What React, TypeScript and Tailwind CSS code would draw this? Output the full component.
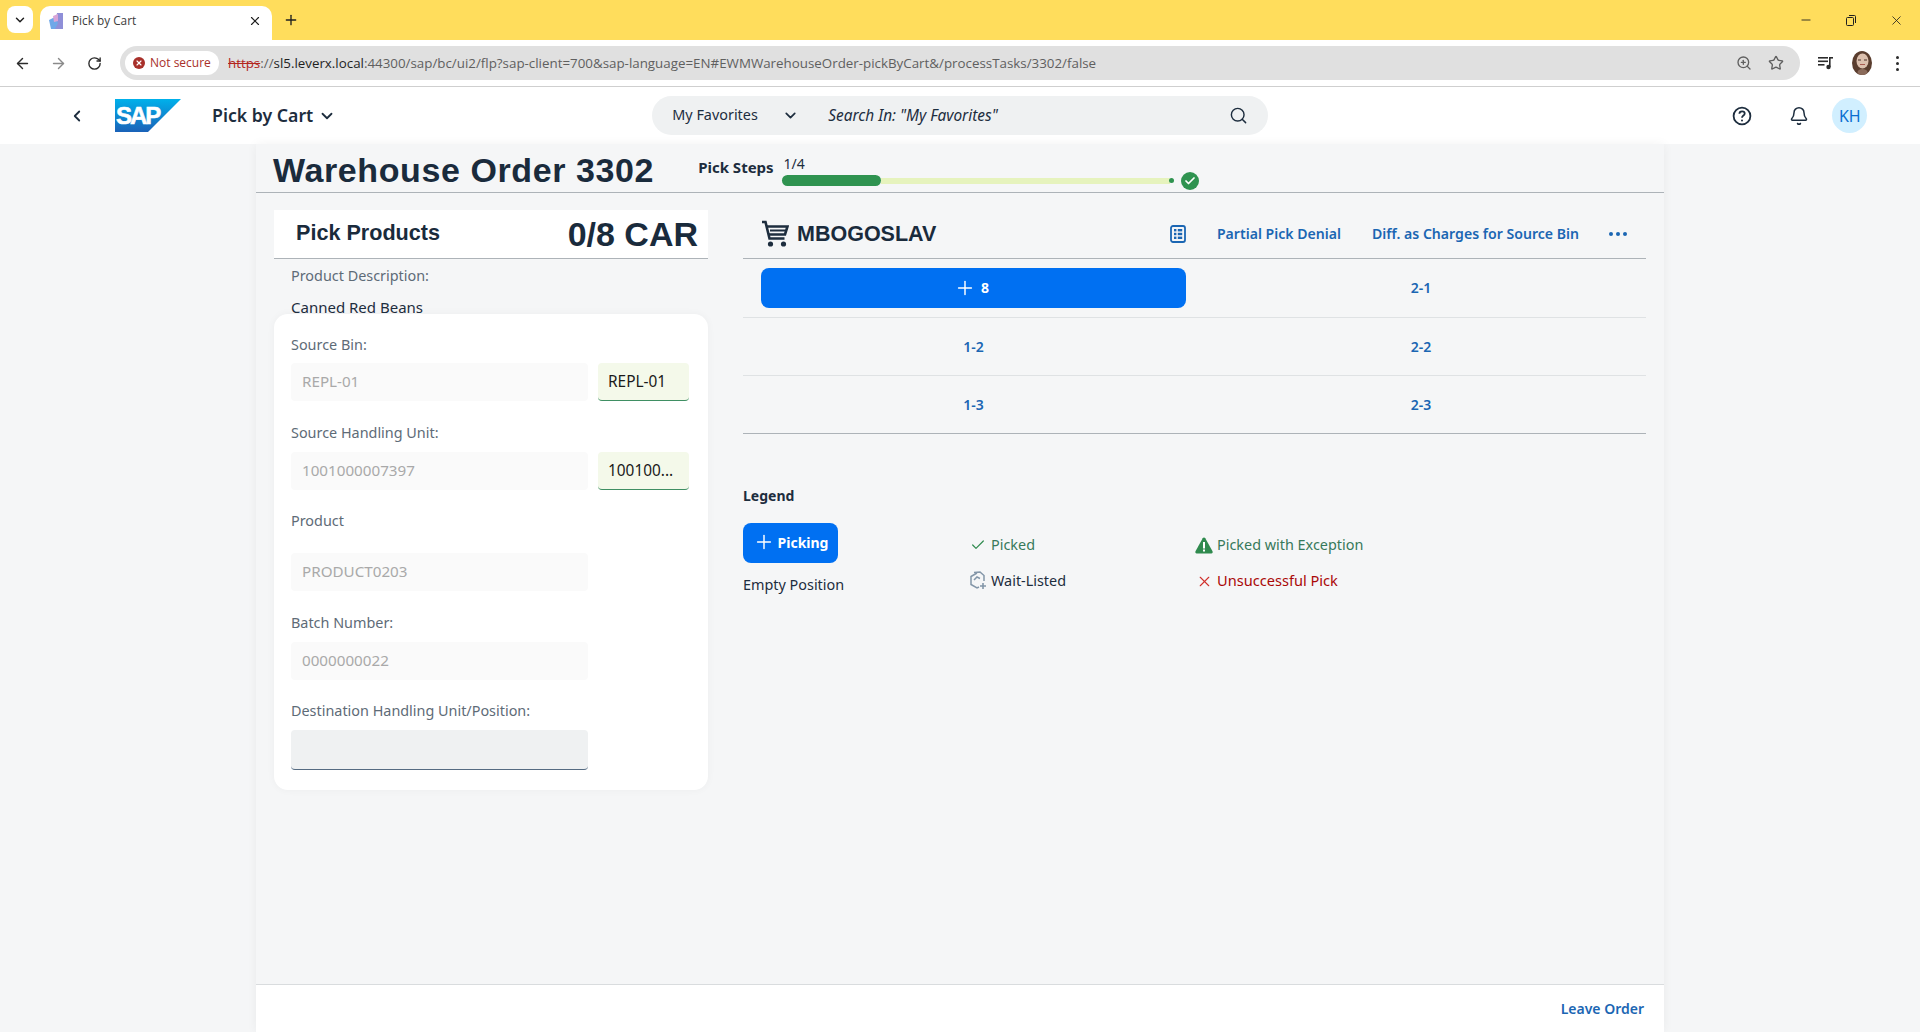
import React from 'react';
import {
  ArrowLeft,
  ArrowRight,
  Bell,
  Check,
  ChevronDown,
  ChevronLeft,
  Minus,
  Plus,
  RotateCw,
  Search,
  Star,
  X,
  ZoomIn,
} from 'lucide-react';

// ---- drawn icons ----

const SapLogo = () => (
  <svg width="66" height="33" viewBox="0 0 66 33" className="shrink-0">
    <defs>
      <linearGradient id="sapBlue" x1="0" y1="0" x2="0" y2="1">
        <stop offset="0" stopColor="#00b1eb" />
        <stop offset="1" stopColor="#1a62b8" />
      </linearGradient>
    </defs>
    <polygon points="0,0 66,0 33,33 0,33" fill="url(#sapBlue)" />
    <text
      x="1"
      y="25"
      fill="#ffffff"
      stroke="#ffffff"
      strokeWidth="0.6"
      fontFamily="'Liberation Sans', sans-serif"
      fontWeight="700"
      fontSize="24"
      letterSpacing="-2"
    >
      SAP
    </text>
  </svg>
);

const CartIcon = () => (
  <svg width="28" height="28" viewBox="0 0 28 28" fill="none" stroke="#1d2d3e" strokeWidth="2.6" className="shrink-0">
    <path d="M1 2h3.500l4 16.500h15" />
    <path d="M6 6.500h20.500l-2.500 8H8" />
    <path d="M9 10.500h15.500" strokeWidth="2" />
    <circle cx="9.500" cy="24" r="2.600" fill="#1d2d3e" stroke="none" />
    <circle cx="22.500" cy="24" r="2.600" fill="#1d2d3e" stroke="none" />
  </svg>
);

const ListIcon = () => (
  <svg width="16" height="18" viewBox="0 0 16 18" fill="none" className="shrink-0">
    <rect x="1" y="1" width="14" height="16" rx="2" stroke="#1b66b3" strokeWidth="1.8" />
    <g fill="#1b66b3">
      <rect x="4" y="4" width="2.400" height="2.400" />
      <rect x="7.800" y="4" width="4.400" height="2.400" />
      <rect x="4" y="7.800" width="2.400" height="2.400" />
      <rect x="7.800" y="7.800" width="4.400" height="2.400" />
      <rect x="4" y="11.600" width="2.400" height="2.400" />
      <rect x="7.800" y="11.600" width="4.400" height="2.400" />
    </g>
  </svg>
);

const HelpIcon = () => (
  <svg width="20" height="20" viewBox="0 0 20 20" fill="none" stroke="#1d2d3e" strokeWidth="1.8" className="shrink-0">
    <circle cx="10" cy="10" r="8.400" />
    <path d="M7.400 7.800c0-1.600 1.200-2.500 2.700-2.500s2.600.9 2.600 2.200c0 2.100-2.700 2-2.700 4.200" />
    <circle cx="10" cy="14.400" r="1" fill="#1d2d3e" stroke="none" />
  </svg>
);

const WaitListedIcon = () => (
  <svg width="19" height="20" viewBox="0 0 19 20" fill="none" stroke="#8396a8" strokeWidth="1.500" className="shrink-0">
    <path d="M8 2 2 5.500v8L8 17l2-1" />
    <path d="M5 1.500 11 1l4 3.500v5.500" />
    <path d="M5 9l3-3 3 1.500" />
    <path d="M14 12v6M11 15h6" strokeWidth="1.600" />
  </svg>
);

const WarningIcon = () => (
  <svg width="18" height="17" viewBox="0 0 18 17" className="shrink-0">
    <path d="M9 .5c.6 0 1 .3 1.300.8l7.200 13c.5 1 0 2.200-1.200 2.200H1.700C.5 16.500 0 15.300.500 14.300l7.200-13C8 .8 8.400.5 9 .5z" fill="#2f8a4e" />
    <rect x="8" y="5" width="2" height="6.500" fill="#ffffff" />
    <rect x="8" y="12.500" width="2" height="2" fill="#ffffff" />
  </svg>
);

const MediaIcon = () => (
  <svg width="16" height="16" viewBox="0 0 16 16" fill="#2b2b2b" className="shrink-0">
    <rect x="0" y="2" width="10" height="1.600" />
    <rect x="0" y="5.500" width="10" height="1.600" />
    <rect x="0" y="9" width="6.500" height="1.600" />
    <rect x="11" y="2" width="4" height="1.600" />
    <rect x="11" y="2" width="1.600" height="10" />
    <circle cx="10.500" cy="12" r="2.200" />
  </svg>
);

const Favicon = () => (
  <svg width="14" height="16" viewBox="0 0 14 16" className="shrink-0">
    <path d="M8 0h6v16H5z" fill="#8f8fd8" />
    <path d="M0 7l6-3 3 6-3 6H2z" fill="#6fa8e8" />
    <path d="M4 3l5-2v7l-4 1z" fill="#d8a4d8" />
  </svg>
);

const RestoreIcon = () => (
  <svg width="12" height="12" viewBox="0 0 12 12" fill="none" stroke="#1f1f1f" strokeWidth="1" className="shrink-0">
    <rect x="1.500" y="3.500" width="7" height="8" rx="1" />
    <path d="M4 1.500h5.500a1 1 0 0 1 1 1V9" />
  </svg>
);

const ChromeAvatar = () => (
  <svg width="20" height="24" viewBox="0 0 20 24" className="shrink-0">
    <ellipse cx="10" cy="12" rx="10" ry="12" fill="#5a3d2e" />
    <ellipse cx="10.500" cy="10" rx="6" ry="7.500" fill="#dcc0ae" />
    <path d="M6 9h3M12 9h3" stroke="#4a3026" strokeWidth="1" />
    <path d="M8 13.500h5" stroke="#a85a50" strokeWidth="1" />
    <ellipse cx="10.500" cy="21" rx="5" ry="3" fill="#8a6a5a" />
  </svg>
);

// ---- small pieces ----

interface FieldProps {
  label: string;
  value?: string;
  scanned?: string;
  labelClass: string;
  boxClass?: string;
}

const Field: React.FC<FieldProps> = ({ label, value, scanned, labelClass, boxClass }) => (
  <div>
    <div className={`text-[14.4px] leading-[20px] text-[#5e6b77] ${labelClass}`}>{label}</div>
    <div className="flex gap-[10px]">
      <div
        className={`w-[297px] rounded-[4px] px-[11px] pb-[2px] flex items-center text-[15.2px] text-[#a9a9a9] ${
          boxClass ?? 'h-[38px] bg-[#fafafa]'
        }`}
      >
        {value}
      </div>
      {scanned && (
        <div className="w-[91px] h-[38px] rounded-[4px] bg-[#f4f9ea] pl-[10px] flex items-center text-[15.4px] text-[#1a1a1a] border-b border-[#3f8f63]">
          {scanned}
        </div>
      )}
    </div>
  </div>
);

const BinLink = ({ children }: { children: React.ReactNode }) => (
  <span className="text-[14px] font-semibold text-[#1b66b3] mt-[-1px]">{children}</span>
);

// ---- page ----

export default function App() {
  return (
    <div className="h-[1032px] w-[1920px] overflow-hidden flex flex-col bg-[#f5f6f7] font-['Noto_Sans',sans-serif] text-[#1d2d3e]">
      {/* Browser tab strip */}
      <div className="h-[40px] shrink-0 bg-[#ffdd5c] flex items-end pl-[7px]">
        <div className="w-[26px] h-[27px] mb-[7px] bg-white rounded-[8px] flex items-center justify-center">
          <ChevronDown size={14} strokeWidth={2.5} color="#1f1f1f" />
        </div>
        <div className="w-[232px] h-[34px] ml-[7px] bg-white rounded-t-[10px] flex items-center pl-[9px] pr-[10px] pb-[4px]">
          <Favicon />
          <span className="ml-[9px] text-[11.8px] text-[#3c3c3c] font-['Open_Sans',sans-serif]">Pick by Cart</span>
          <X size={14} strokeWidth={2} color="#1f1f1f" className="ml-auto" />
        </div>
        <Plus size={16} strokeWidth={2} color="#1f1f1f" className="ml-[11px] mb-[12px]" />
        <div className="ml-auto h-[40px] flex items-center pr-[16px] gap-[32px]">
          <Minus size={14} strokeWidth={1.5} color="#1f1f1f" />
          <RestoreIcon />
          <X size={15} strokeWidth={1.3} color="#1f1f1f" />
        </div>
      </div>

      {/* Browser toolbar */}
      <div className="h-[47px] shrink-0 bg-white border-b border-[#cfcfcf] flex items-center pl-[14px]">
        <ArrowLeft size={17} strokeWidth={2} color="#2b2b2b" />
        <ArrowRight size={17} strokeWidth={2} color="#8a8a8a" className="ml-[19px]" />
        <RotateCw size={15} strokeWidth={2.2} color="#2b2b2b" className="ml-[20px]" />
        <div className="ml-[18px] w-[1680px] h-[34px] rounded-full bg-[#e0e0e0] flex items-center pl-[5px] pr-[16px]">
          <div className="h-[24px] w-[94px] rounded-full bg-white flex items-center pl-[8px] gap-[5px]">
            <span className="w-[12px] h-[12px] rounded-full bg-[#a8302a] flex items-center justify-center">
              <X size={8} strokeWidth={3.5} color="#ffffff" />
            </span>
            <span className="text-[12px] text-[#a8302a] font-['Open_Sans',sans-serif] whitespace-nowrap">Not secure</span>
          </div>
          <div className="ml-[9px] text-[13.35px] whitespace-nowrap font-['Open_Sans',sans-serif] text-[#5f5f5f]">
            <span className="text-[#b3261e] line-through">https</span>
            <span>://</span>
            <span className="text-[#1f1f1f]">sl5.leverx.local</span>
            <span>:44300/sap/bc/ui2/flp?sap-client=700&amp;sap-language=EN#EWMWarehouseOrder-pickByCart&amp;/processTasks/3302/false</span>
          </div>
          <ZoomIn size={16} strokeWidth={2} color="#5f5f5f" className="ml-auto" />
          <Star size={16} strokeWidth={2} color="#5f5f5f" className="ml-[16px]" />
        </div>
        <div className="ml-[18px]">
          <MediaIcon />
        </div>
        <div className="ml-[18px]">
          <ChromeAvatar />
        </div>
        <div className="ml-[24px] flex flex-col gap-[3px]">
          <span className="w-[3px] h-[3px] rounded-full bg-[#2b2b2b]" />
          <span className="w-[3px] h-[3px] rounded-full bg-[#2b2b2b]" />
          <span className="w-[3px] h-[3px] rounded-full bg-[#2b2b2b]" />
        </div>
      </div>

      {/* Shell header */}
      <div className="h-[57px] shrink-0 bg-white flex items-center">
        <ChevronLeft size={18} strokeWidth={2.4} color="#1d2d3e" className="ml-[68px]" />
        <div className="ml-[29px]">
          <SapLogo />
        </div>
        <span className="ml-[31px] text-[17.7px] font-semibold whitespace-nowrap">Pick by Cart</span>
        <ChevronDown size={18} strokeWidth={2.4} color="#1d2d3e" className="ml-[5px]" />
        <div className="ml-[316px] w-[616px] h-[39px] rounded-full bg-[#eff1f2] flex items-center pl-[20px] pr-[20px]">
          <span className="text-[14.4px] w-[110px] whitespace-nowrap mt-[-2px]">My Favorites</span>
          <ChevronDown size={17} strokeWidth={2.4} color="#1d2d3e" />
          <span className="ml-[29px] text-[15.4px] italic whitespace-nowrap">Search In: &quot;My Favorites&quot;</span>
          <Search size={19} strokeWidth={1.8} color="#1d2d3e" className="ml-auto" />
        </div>
        <div className="ml-[464px]">
          <HelpIcon />
        </div>
        <Bell size={20} strokeWidth={1.8} color="#1d2d3e" className="ml-[37px]" />
        <div className="ml-[23px] w-[35px] h-[35px] rounded-full bg-[#d1efff] flex items-center justify-center text-[16px] text-[#0a6ed1]">
          KH
        </div>
      </div>

      {/* Page column */}
      <div className="flex-1 min-h-0 w-[1408px] ml-[256px] flex flex-col shadow-[0_0_10px_rgba(0,0,0,0.05)]">
        {/* Order title */}
        <div className="h-[49px] shrink-0 border-b border-[#adb3b8] flex items-center pl-[17px]">
          <h1 className="mt-[3px] text-[34px] tracking-[0.6px] leading-none font-bold font-['Liberation_Sans',sans-serif] whitespace-nowrap text-[#1a2b3c]">
            Warehouse Order 3302
          </h1>
          <span className="ml-[44px] text-[15px] font-bold whitespace-nowrap mt-[-2px]">Pick Steps</span>
          <div className="ml-[8px] w-[420px] flex flex-col mt-[7px]">
            <span className="ml-[2px] text-[14px] leading-[16px]">1/4</span>
            <div className="flex items-center h-[14px] mt-[2px]">
              <div className="w-[99px] h-[11px] rounded-full bg-[#2f9350] shrink-0" />
              <div className="w-[289px] h-[6px] bg-[#e6f3bd] shrink-0" />
              <div className="w-[5px] h-[5px] rounded-full bg-[#2f9350] shrink-0 ml-[-1px]" />
              <div className="ml-[7px] w-[18px] h-[18px] rounded-full bg-[#2f9350] shrink-0 flex items-center justify-center">
                <Check size={12} strokeWidth={3.5} color="#ffffff" />
              </div>
            </div>
          </div>
        </div>

        {/* Panels */}
        <div className="flex-1 min-h-0 flex pl-[18px] pt-[17px]">
          {/* Left panel */}
          <div className="w-[434px] shrink-0">
            <div className="h-[49px] bg-white border-b border-[#adb3b8] flex items-center justify-between pl-[22px] pr-[10px] pb-[1px] font-['Liberation_Sans',sans-serif] font-bold text-[#1a2b3c]">
              <span className="text-[21.6px]">Pick Products</span>
              <span className="text-[34px] leading-none">0/8 CAR</span>
            </div>
            <div className="h-[55px] pl-[17px] pt-[7px]">
              <div className="text-[14.4px] leading-[20px] text-[#5e6b77]">Product Description:</div>
              <div className="mt-[11px] text-[15px] leading-[20px]">Canned Red Beans</div>
            </div>
            <div className="h-[476px] rounded-[14px] bg-white shadow-[0_0_8px_rgba(0,0,0,0.04)] px-[17px] pt-[21px] flex flex-col">
              <Field label="Source Bin:" value="REPL-01" scanned="REPL-01" labelClass="mb-[8px]" />
              <Field label="Source Handling Unit:" value="1001000007397" scanned="100100..." labelClass="mt-[22px] mb-[9px]" />
              <Field label="Product" value="PRODUCT0203" labelClass="mt-[21px] mb-[22px]" />
              <Field label="Batch Number:" value="0000000022" labelClass="mt-[22px] mb-[9px]" />
              <Field
                label="Destination Handling Unit/Position:"
                labelClass="mt-[21px] mb-[9px]"
                boxClass="h-[40px] bg-[#eff1f2] border-b border-[#556b82]"
              />
            </div>
          </div>

          {/* Right panel */}
          <div className="ml-[35px] w-[903px] shrink-0">
            <div className="h-[49px] border-b border-[#adb3b8] flex items-center pl-[18px] pr-[19px]">
              <CartIcon />
              <span className="ml-[8px] text-[21.5px] font-bold font-['Liberation_Sans',sans-serif] text-[#1a2b3c]">MBOGOSLAV</span>
              <div className="ml-auto">
                <ListIcon />
              </div>
              <span className="ml-[31px] text-[14.1px] mt-[-1px] font-semibold text-[#1b66b3] whitespace-nowrap">Partial Pick Denial</span>
              <span className="ml-[31px] text-[14.1px] mt-[-1px] font-semibold text-[#1b66b3] whitespace-nowrap">Diff. as Charges for Source Bin</span>
              <div className="ml-[30px] flex gap-[3px]">
                <span className="w-[4px] h-[4px] rounded-full bg-[#1b66b3]" />
                <span className="w-[4px] h-[4px] rounded-full bg-[#1b66b3]" />
                <span className="w-[4px] h-[4px] rounded-full bg-[#1b66b3]" />
              </div>
            </div>
            <div className="grid grid-cols-[453px_1fr] h-[59px] border-b border-[#dfe2e4]">
              <div className="pl-[18px] pr-[10px] flex items-center">
                <div className="w-full h-[40px] rounded-[8px] bg-[#0070f2] flex items-center justify-center gap-[5px] text-white text-[14px] font-bold pr-[4px]">
                  <Plus size={22} strokeWidth={1.6} color="#ffffff" />
                  <span className="mt-[-1px]">8</span>
                </div>
              </div>
              <div className="flex items-center justify-center">
                <BinLink>2-1</BinLink>
              </div>
            </div>
            <div className="grid grid-cols-[453px_1fr] h-[58px] border-b border-[#dfe2e4]">
              <div className="pl-[18px] pr-[10px] flex items-center justify-center">
                <BinLink>1-2</BinLink>
              </div>
              <div className="flex items-center justify-center">
                <BinLink>2-2</BinLink>
              </div>
            </div>
            <div className="grid grid-cols-[453px_1fr] h-[58px] border-b border-[#adb3b8]">
              <div className="pl-[18px] pr-[10px] flex items-center justify-center">
                <BinLink>1-3</BinLink>
              </div>
              <div className="flex items-center justify-center">
                <BinLink>2-3</BinLink>
              </div>
            </div>

            {/* Legend */}
            <div className="mt-[52px] text-[14px] font-bold leading-[20px]">Legend</div>
            <div className="mt-[17px] grid grid-cols-[226px_226px_1fr] text-[14.4px]">
              <div>
                <div className="w-[95px] h-[40px] rounded-[8px] bg-[#0070f2] flex items-center justify-center gap-[3px] text-white font-bold text-[14px] pb-[2px]">
                  <Plus size={22} strokeWidth={1.6} color="#ffffff" />
                  Picking
                </div>
                <div className="mt-[12px] leading-[20px]">Empty Position</div>
              </div>
              <div className="pt-[12px]">
                <div className="flex items-center h-[20px] pl-[1px] gap-[5px] text-[#37795a]">
                  <Check size={16} strokeWidth={1.8} color="#2f8a4e" />
                  Picked
                </div>
                <div className="mt-[16px] flex items-center h-[20px] gap-[3px]">
                  <WaitListedIcon />
                  Wait-Listed
                </div>
              </div>
              <div className="pt-[12px]">
                <div className="flex items-center h-[20px] gap-[4px] text-[#37795a] whitespace-nowrap">
                  <WarningIcon />
                  Picked with Exception
                </div>
                <div className="mt-[16px] flex items-center h-[20px] gap-[4px] pl-[1px] text-[#aa0808] text-[14.6px]">
                  <X size={17} strokeWidth={1.6} color="#d0312d" />
                  Unsuccessful Pick
                </div>
              </div>
            </div>
          </div>
        </div>

        {/* Footer */}
        <div className="h-[48px] shrink-0 bg-white border-t border-[#d9dcde] flex items-center justify-end pr-[20px]">
          <span className="text-[14px] font-semibold text-[#1b66b3]">Leave Order</span>
        </div>
      </div>
    </div>
  );
}
